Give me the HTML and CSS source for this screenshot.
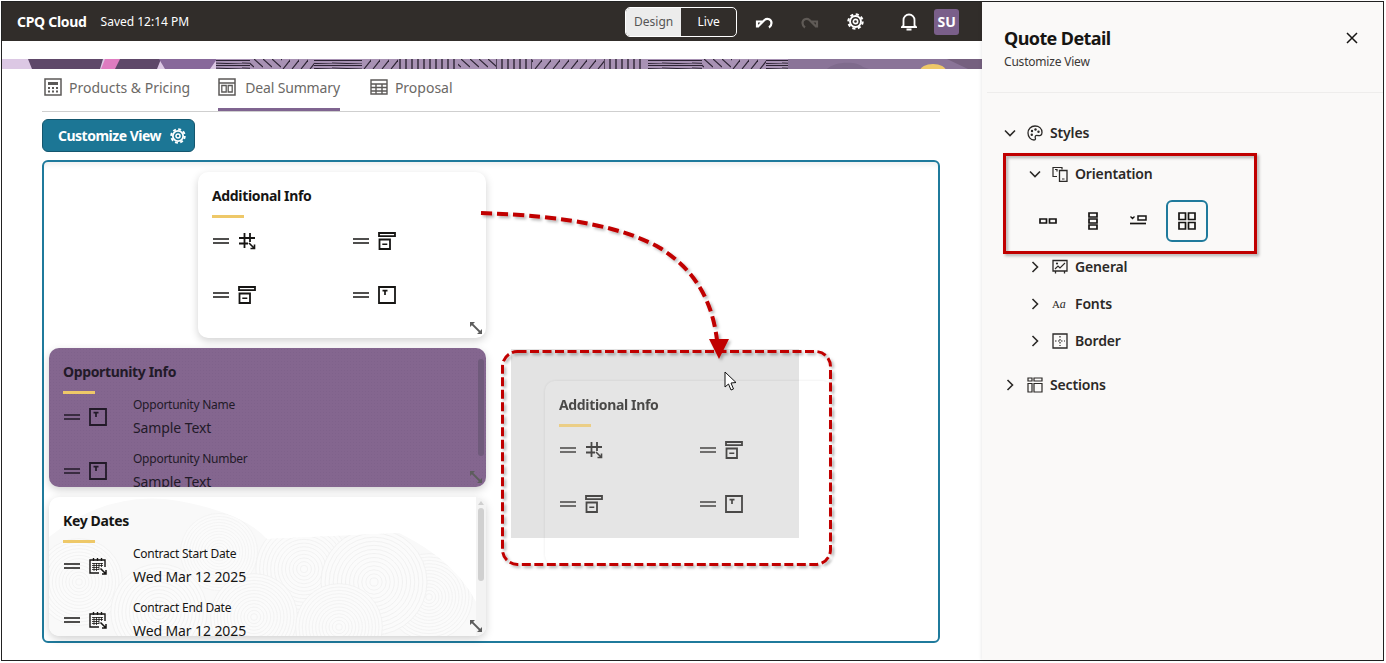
FILE: index.html
```html
<!DOCTYPE html>
<html lang="en">
<head>
    <meta charset="UTF-8">
    <meta name="viewport" content="width=device-width, initial-scale=1.0">
    <title>CPQ Cloud - Customize View</title>
    <link rel="stylesheet" href="styles.css">
</head>
<body>
    <svg class="sprites" width="0" height="0">
        <defs>
            <symbol id="i-drag" viewBox="0 0 16 18"><path d="M0 7h16M0 11h16" fill="none" stroke="currentColor" stroke-width="1.400"/></symbol>
            <symbol id="i-number" viewBox="0 0 18 18"><path d="M6.500 1v15M12 1v9M1 6h16M1 11.500h9" fill="none" stroke="currentColor" stroke-width="1.800"/><path d="M11 11l5 5M16.500 12.500v4h-4" fill="none" stroke="currentColor" stroke-width="1.600"/></symbol>
            <symbol id="i-select" viewBox="0 0 18 18"><path d="M1 1h16v3.200H1zM1.500 7.500h10.500V17H1.500z" fill="none" stroke="currentColor" stroke-width="1.800"/><path d="M4.300 12.200h5" stroke="currentColor" stroke-width="1.500"/></symbol>
            <symbol id="i-text" viewBox="0 0 18 18"><path d="M1 1h16v16H1z" fill="none" stroke="currentColor" stroke-width="1.800"/><path d="M4.500 4.700h5M7 4.700v4.300" fill="none" stroke="currentColor" stroke-width="1.700"/></symbol>
            <symbol id="i-cal" viewBox="0 0 18 18"><path d="M10 16H1V3h15v7" fill="none" stroke="currentColor" stroke-width="1.400"/><path d="M4.500 1v3M8.500 1v3M12.500 1v3" stroke="currentColor" stroke-width="1.400"/><path d="M3 6.500h11M3 8.500h11M3 10.500h7M3 12.500h7M5 6v8M7.500 6v8M10 6v7M12.500 6v4" stroke="currentColor" stroke-width=".8"/><path d="M11.500 11.500l5 5M17 13v4h-4" fill="none" stroke="currentColor" stroke-width="1.500"/></symbol>
            <symbol id="i-resize" viewBox="0 0 14 14"><path d="M2.500 2.500l9 9" stroke="currentColor" stroke-width="1.800"/><path d="M1 6V1h5zM13 8v5H8z" fill="currentColor"/></symbol>
            <symbol id="i-gear" viewBox="0 0 18 18"><circle cx="9" cy="9" r="5.800" fill="none" stroke="currentColor" stroke-width="2"/><circle cx="9" cy="9" r="7.600" fill="none" stroke="currentColor" stroke-width="2.200" stroke-dasharray="3.300 2.670"/><circle cx="9" cy="9" r="2.300" fill="none" stroke="currentColor" stroke-width="1.700"/></symbol>
            <symbol id="i-chev-down" viewBox="0 0 12 8"><path d="M1 1.500l5 5 5-5" fill="none" stroke="currentColor" stroke-width="1.600"/></symbol>
            <symbol id="i-chev-right" viewBox="0 0 8 12"><path d="M1.500 1l5 5-5 5" fill="none" stroke="currentColor" stroke-width="1.600"/></symbol>
            <symbol id="i-rings" viewBox="-54 -54 108 108"><g fill="none" stroke="#efefef" stroke-width=".8"><circle r="52" fill="#fbfbfb"/><circle r="48"/><circle r="44"/><circle r="40"/><circle r="36"/><circle r="32"/><circle r="28"/><circle r="24"/><circle r="20"/><circle r="16"/><circle r="12"/><circle r="8"/><circle r="4"/></g></symbol>
        </defs>
    </svg>

    <div class="frame">
        <div class="main">
            <header class="topbar">
                <span class="brand">CPQ Cloud</span>
                <span class="saved">Saved 12:14 PM</span>
                <div class="toggle">
                    <span class="toggle-on">Design</span>
                    <span class="toggle-off">Live</span>
                </div>
                <svg class="top-icon undo" width="18" height="16" viewBox="0 0 18 16"><path d="M2 13.500V7.500h6M2.500 13l7-7c3-2.500 7-.5 7 3 0 2-1 3.500-2.500 4.500" fill="none" stroke="currentColor" stroke-width="2.200"/></svg>
                <svg class="top-icon redo" width="18" height="16" viewBox="0 0 18 16"><path d="M16 13.500V7.500h-6M15.500 13l-7-7c-3-2.500-7-.5-7 3 0 2 1 3.500 2.500 4.500" fill="none" stroke="currentColor" stroke-width="2.200"/></svg>
                <svg class="top-icon gear" width="17" height="17"><use href="#i-gear"/></svg>
                <svg class="top-icon bell" width="16" height="18" viewBox="0 0 16 18"><path d="M2.500 12.500V7a5.500 5.500 0 0 1 11 0v5.500l1.500 1.500H1zM5.500 16.500h5" fill="none" stroke="currentColor" stroke-width="1.800"/><path d="M8 1v1" stroke="currentColor" stroke-width="1.800"/></svg>
                <span class="avatar">SU</span>
            </header>
            <div class="banner-gap"></div>
            <svg class="banner" width="980" height="10" viewBox="0 0 980 10" preserveAspectRatio="none">
                <defs>
                    <pattern id="p-h" width="30" height="5" patternUnits="userSpaceOnUse"><path d="M0 1.500h30M0 4l30 1" stroke="#2c2333" stroke-width="1"/></pattern>
                    <pattern id="p-v" width="6" height="10" patternUnits="userSpaceOnUse"><path d="M2 0v10" stroke="#2c2333" stroke-width="1.400"/></pattern>
                    <pattern id="p-f" width="9" height="10" patternUnits="userSpaceOnUse"><path d="M10 0L2 10" stroke="#2c2333" stroke-width="1.200"/></pattern>
                    <pattern id="p-b" width="9" height="10" patternUnits="userSpaceOnUse"><path d="M0 0l9 8" stroke="#2c2333" stroke-width="1.200"/></pattern>
                </defs>
                <rect width="980" height="10" fill="#dcc8e4"/>
                <path d="M26 0h75l-3 10H30zM116 0h43l-4 10h-43z" fill="#5e4869"/>
                <path d="M103 0h15l-5 10H99z" fill="#de7cc0"/>
                <path d="M157 0h58l-7 10h-45z" fill="#87689a"/>
                <rect x="214" width="572" height="10" fill="#a892b4"/>
                <rect x="214" width="34" height="10" fill="url(#p-h)"/>
                <rect x="248" width="32" height="10" fill="url(#p-b)"/>
                <rect x="280" width="32" height="10" fill="url(#p-f)"/>
                <rect x="312" width="48" height="10" fill="url(#p-h)"/>
                <rect x="360" width="36" height="10" fill="url(#p-f)"/>
                <rect x="396" width="60" height="10" fill="url(#p-v)"/>
                <rect x="456" width="38" height="10" fill="url(#p-b)"/>
                <rect x="494" width="36" height="10" fill="url(#p-v)"/>
                <rect x="530" width="72" height="10" fill="url(#p-f)"/>
                <rect x="602" width="40" height="10" fill="url(#p-v)"/>
                <rect x="646" width="54" height="10" fill="url(#p-h)"/>
                <rect x="700" width="30" height="10" fill="url(#p-b)"/>
                <rect x="730" width="34" height="10" fill="url(#p-f)"/>
                <rect x="764" width="22" height="10" fill="url(#p-h)"/>
                <rect x="786" width="194" height="10" fill="#8a7498"/>
                <path d="M825 10c8-8 30-8 36-2l6 2z" fill="#7f6b8d"/>
                <path d="M945 0h35v10h-14z" fill="#75607f"/>
                <ellipse cx="931" cy="12" rx="13" ry="7" fill="#eec868"/>
            </svg>

            <nav class="tabs">
                <a class="tab">
                    <svg width="18" height="18" viewBox="0 0 18 18"><path d="M1 1h16v16H1z" fill="none" stroke="currentColor" stroke-width="1.500"/><path d="M4 4h10v3H4z" fill="currentColor"/><path d="M4 10h2M8 10h2M12 10h2M4 13.500h2M8 13.500h2M12 13.500h2" stroke="currentColor" stroke-width="1.800"/></svg>
                    Products &amp; Pricing
                </a>
                <a class="tab tab-active">
                    <svg width="18" height="18" viewBox="0 0 18 18"><path d="M1 1h16v16H1zM1 5h16" fill="none" stroke="currentColor" stroke-width="1.500"/><path d="M3.800 7.500h4.400v6.500H3.800zM10.200 7.500h4v6.500h-4z" fill="none" stroke="currentColor" stroke-width="1.300"/></svg>
                    Deal Summary
                </a>
                <a class="tab">
                    <svg width="18" height="18" viewBox="0 0 18 18"><path d="M1 2h16v14H1zM1 6h16M1 9.500h16M1 13h16M6 6v10M12 6v10" fill="none" stroke="currentColor" stroke-width="1.400"/></svg>
                    Proposal
                </a>
            </nav>

            <button class="customize">
                Customize View
                <svg width="16" height="16"><use href="#i-gear"/></svg>
            </button>

            <section class="canvas">
                <div class="col">
                    <article class="card card-small">
                        <h3>Additional Info</h3>
                        <div class="fields fields-two">
                            <div class="field"><svg class="drag"><use href="#i-drag"/></svg><svg class="type"><use href="#i-number"/></svg></div>
                            <div class="field"><svg class="drag"><use href="#i-drag"/></svg><svg class="type"><use href="#i-select"/></svg></div>
                            <div class="field"><svg class="drag"><use href="#i-drag"/></svg><svg class="type"><use href="#i-select"/></svg></div>
                            <div class="field"><svg class="drag"><use href="#i-drag"/></svg><svg class="type"><use href="#i-text"/></svg></div>
                        </div>
                        <svg class="resize"><use href="#i-resize"/></svg>
                    </article>

                    <article class="card card-wide card-picked">
                        <h3>Opportunity Info</h3>
                        <div class="fields">
                            <div class="field">
                                <svg class="drag"><use href="#i-drag"/></svg><svg class="type"><use href="#i-text"/></svg>
                                <div class="field-text"><div class="field-label">Opportunity Name</div><div class="field-value">Sample Text</div></div>
                            </div>
                            <div class="field">
                                <svg class="drag"><use href="#i-drag"/></svg><svg class="type"><use href="#i-text"/></svg>
                                <div class="field-text"><div class="field-label">Opportunity Number</div><div class="field-value">Sample Text</div></div>
                            </div>
                        </div>
                        <div class="scrollbar"><div class="thumb"></div></div>
                        <svg class="resize"><use href="#i-resize"/></svg>
                    </article>

                    <article class="card card-wide card-swirl">
                        <svg class="swirl" width="437" height="139" viewBox="0 0 437 139">
                            <defs>
                                <clipPath id="swirl-clip"><path d="M0 40Q60-8 130 4Q195 16 218 42L350 36Q420 70 437 130V139H0z"/></clipPath>
                            </defs>
                            <g clip-path="url(#swirl-clip)">
                                <rect width="437" height="139" fill="#f9f9f9"/>
                                <use href="#i-rings" x="-15" y="40" width="90" height="90"/>
                                <use href="#i-rings" x="130" y="15" width="80" height="80"/>
                                <use href="#i-rings" x="205" y="22" width="100" height="100"/>
                                <use href="#i-rings" x="335" y="55" width="90" height="90"/>
                                <use href="#i-rings" x="270" y="30" width="110" height="110"/>
                                <use href="#i-rings" x="60" y="65" width="100" height="100"/>
                                <use href="#i-rings" x="160" y="75" width="90" height="90"/>
                                <use href="#i-rings" x="245" y="85" width="90" height="90"/>
                            </g>
                        </svg>
                        <h3>Key Dates</h3>
                        <div class="fields">
                            <div class="field">
                                <svg class="drag"><use href="#i-drag"/></svg><svg class="type"><use href="#i-cal"/></svg>
                                <div class="field-text"><div class="field-label">Contract Start Date</div><div class="field-value">Wed Mar 12 2025</div></div>
                            </div>
                            <div class="field">
                                <svg class="drag"><use href="#i-drag"/></svg><svg class="type"><use href="#i-cal"/></svg>
                                <div class="field-text"><div class="field-label">Contract End Date</div><div class="field-value">Wed Mar 12 2025</div></div>
                            </div>
                        </div>
                        <div class="scrollbar"><div class="scroll-up"></div><div class="thumb"></div></div>
                        <svg class="resize"><use href="#i-resize"/></svg>
                    </article>
                </div>

                <div class="drop-area"></div>
                <article class="card card-small card-ghost">
                    <h3>Additional Info</h3>
                    <div class="fields fields-two">
                        <div class="field"><svg class="drag"><use href="#i-drag"/></svg><svg class="type"><use href="#i-number"/></svg></div>
                        <div class="field"><svg class="drag"><use href="#i-drag"/></svg><svg class="type"><use href="#i-select"/></svg></div>
                        <div class="field"><svg class="drag"><use href="#i-drag"/></svg><svg class="type"><use href="#i-select"/></svg></div>
                        <div class="field"><svg class="drag"><use href="#i-drag"/></svg><svg class="type"><use href="#i-text"/></svg></div>
                    </div>
                </article>
            </section>
        </div>

        <aside class="panel">
            <div class="panel-head">
                <div>
                    <h2>Quote Detail</h2>
                    <p>Customize View</p>
                </div>
                <svg class="close" width="12" height="12" viewBox="0 0 12 12"><path d="M1 1l10 10M11 1L1 11" stroke="currentColor" stroke-width="1.500"/></svg>
            </div>
            <div class="tree">
                <div class="row">
                    <svg class="chev-down"><use href="#i-chev-down"/></svg>
                    <svg class="row-icon" viewBox="0 0 16 16"><path d="M8 1C4 1 1 4 1 8c0 3.500 2.500 7 6 7 2 0 1.500-1.500 1.200-2.500C8 11 9 10 10.500 10.500c2 .5 4.500 0 4.500-3C15 3.500 12 1 8 1z" fill="none" stroke="currentColor" stroke-width="1.300"/><circle cx="5" cy="6" r="1.200" fill="currentColor"/><circle cx="8.500" cy="4.500" r="1.200" fill="currentColor"/><circle cx="11.500" cy="6.800" r="1.200" fill="currentColor"/><circle cx="4.800" cy="9.800" r="1.200" fill="currentColor"/></svg>
                    <span>Styles</span>
                </div>
                <div class="row row-sub row-orient">
                    <svg class="chev-down"><use href="#i-chev-down"/></svg>
                    <svg class="row-icon" viewBox="0 0 16 16"><path d="M5 10.500H1V1.500h9v2" fill="none" stroke="currentColor" stroke-width="1.200"/><path d="M7.500 4.500h7.500v11H7.500z" fill="none" stroke="currentColor" stroke-width="1.300"/><path d="M10 13h2.500M3 3.500h2v2" fill="none" stroke="currentColor" stroke-width="1.200"/></svg>
                    <span>Orientation</span>
                </div>
                <div class="options">
                    <div class="option"><svg width="18" height="18" viewBox="0 0 18 18"><path d="M1 7h6.500v4H1zM10.500 7H17v4h-6.500z" fill="none" stroke="currentColor" stroke-width="1.700"/></svg></div>
                    <div class="option"><svg width="18" height="18" viewBox="0 0 18 18"><path d="M5 1h8v4H5zM5 7h8v4H5zM5 13h8v4H5z" fill="none" stroke="currentColor" stroke-width="1.700"/></svg></div>
                    <div class="option"><svg width="18" height="18" viewBox="0 0 18 18"><path d="M9 4h8v4H9z" fill="none" stroke="currentColor" stroke-width="1.500"/><path d="M1 11.500h16" stroke="currentColor" stroke-width="1.700"/><path d="M1.500 4.500L3.500 6.500 5.500 4.500" fill="none" stroke="currentColor" stroke-width="1.300"/></svg></div>
                    <div class="option option-on"><svg width="18" height="18" viewBox="0 0 18 18"><path d="M1 1h6.500v6.500H1zM10.500 1H17v6.500h-6.500zM1 10.500h6.500V17H1zM10.500 10.500H17V17h-6.500z" fill="none" stroke="currentColor" stroke-width="1.700"/></svg></div>
                </div>
                <div class="row row-sub row-general">
                    <svg class="chev-right"><use href="#i-chev-right"/></svg>
                    <svg class="row-icon" viewBox="0 0 16 16"><path d="M1 1.500h14v10.500H1zM3.500 12v2.500M12.500 12v2.500" fill="none" stroke="currentColor" stroke-width="1.300"/><path d="M3 10l3-3 2 2 5-5" fill="none" stroke="currentColor" stroke-width="1.100"/><circle cx="5" cy="4.500" r="1.100" fill="currentColor"/></svg>
                    <span>General</span>
                </div>
                <div class="row row-sub">
                    <svg class="chev-right"><use href="#i-chev-right"/></svg>
                    <span class="row-icon aa">A<i>a</i></span>
                    <span>Fonts</span>
                </div>
                <div class="row row-sub">
                    <svg class="chev-right"><use href="#i-chev-right"/></svg>
                    <svg class="row-icon" viewBox="0 0 16 16"><path d="M1 1h14v14H1z" fill="none" stroke="currentColor" stroke-width="1.300"/><path d="M8 3v10M3 8h10" stroke="currentColor" stroke-width="1.200" stroke-dasharray="1.500 1.500"/></svg>
                    <span>Border</span>
                </div>
                <div class="row row-sections">
                    <svg class="chev-right"><use href="#i-chev-right"/></svg>
                    <svg class="row-icon" viewBox="0 0 16 16"><path d="M1 1h4v3H1zM1 6.500h4V15H1zM7 1h8v3H7zM7 6.500h8V15H7z" fill="none" stroke="currentColor" stroke-width="1.200"/></svg>
                    <span>Sections</span>
                </div>
            </div>
        </aside>
    </div>

    <!-- callouts drawn on top of the screenshot -->
    <svg class="callouts" width="1386" height="663" viewBox="0 0 1386 663">
        <defs>
            <filter id="soft" x="-10%" y="-10%" width="125%" height="125%"><feDropShadow dx="2" dy="2" stdDeviation="1.500" flood-color="#000" flood-opacity=".3"/></filter>
        </defs>
        <g filter="url(#soft)">
            <rect x="1004.500" y="154.500" width="251" height="98" fill="none" stroke="#c00000" stroke-width="3"/>
            <rect x="502.500" y="351.500" width="328" height="213" rx="15" fill="none" stroke="#c00000" stroke-width="3" stroke-dasharray="9 3.500"/>
            <path d="M481 213C570 216 625 228 660 248C695 270 712 300 717 340" fill="none" stroke="#c00000" stroke-width="4" stroke-dasharray="11 5"/>
            <path d="M709 339h20l-10 20z" fill="#c00000"/>
        </g>
        <path d="M725 372v15l3.500-3 2.500 6 2.500-1-2.500-6 5-.5z" fill="#fff" stroke="#111" stroke-width="1"/>
    </svg>
</body>
</html>
```

FILE: styles.css
```css
* {
    box-sizing: border-box;
}
html, body {
    margin: 0;
    height: 100%;
    overflow: hidden;
    background: white;
}
body {
    position: relative;
    font-family: "Noto Sans", Arial, sans-serif;
    color: #161513;
}
.sprites {
    position: absolute;
}
.frame {
    display: flex;
    width: 1383px;
    height: 660px;
    margin: 1px;
    border: 1px solid #222;
}

/* left side */
.main {
    width: 980px;
    flex: none;
    display: flex;
    flex-direction: column;
}
.topbar {
    height: 39px;
    background: #312d2a;
    color: white;
    display: flex;
    align-items: center;
    padding-left: 15px;
}
.brand {
    font-size: 14px;
    font-weight: 700;
    letter-spacing: -0.3px;
}
.saved {
    font-size: 12px;
    margin-left: 14px;
}
.toggle {
    display: flex;
    margin-left: 436px;
    width: 112px;
    height: 30px;
    border: 1px solid white;
    border-radius: 5px;
    overflow: hidden;
    font-size: 12px;
    line-height: 28px;
    text-align: center;
}
.toggle-on {
    width: 55px;
    background: #ececec;
    color: #555;
}
.toggle-off {
    flex: 1;
}
.top-icon {
    flex: none;
}
.undo {
    margin-left: 18px;
}
.redo {
    margin-left: 28px;
    color: #5f5a56;
}
.gear {
    margin-left: 28px;
}
.bell {
    margin-left: 37px;
}
.avatar {
    width: 25px;
    height: 26px;
    margin-left: 17px;
    background: #7a5f8a;
    border-radius: 3px;
    font-size: 14px;
    font-weight: 700;
    line-height: 26px;
    text-align: center;
}
.banner-gap {
    height: 18px;
}
.banner {
    display: block;
    flex: none;
}
.tabs {
    display: flex;
    gap: 28px;
    height: 43px;
    margin: 0 42px 0 40px;
    padding-left: 2px;
    border-bottom: 1px solid #cfcfcf;
}
.tab {
    display: flex;
    align-items: center;
    gap: 7px;
    height: 42px;
    padding-bottom: 3px;
    font-size: 14px;
    color: #6b6966;
    border-bottom: 3px solid transparent;
}
.tab svg {
    color: #5c5a58;
}
.tab-active {
    gap: 9px;
    margin-right: 2px;
    letter-spacing: -0.15px;
    border-bottom-color: #7f6490;
}
.customize {
    display: flex;
    align-items: center;
    gap: 9px;
    width: 153px;
    height: 33px;
    margin: 7px 0 8px 40px;
    padding: 0 0 0 15px;
    background: #1c7695;
    border: 1px solid #14566e;
    border-radius: 6px;
    color: white;
    font-family: inherit;
    font-size: 14px;
    font-weight: 700;
    letter-spacing: -0.5px;
}
.canvas {
    position: relative;
    width: 898px;
    height: 483px;
    margin-left: 40px;
    padding: 10px 5px;
    border: 2px solid #1f7a9c;
    border-radius: 6px;
    box-shadow: inset 0 7px 5px -4px #f0f0f0;
}
.col {
    display: flex;
    flex-direction: column;
    gap: 10px;
    width: 437px;
}
.card {
    position: relative;
    flex: none;
    overflow: hidden;
    padding: 14px;
    background: white;
    border-radius: 10px;
    box-shadow: 0 3px 9px rgba(0,0,0,0.18);
}
.card h3 {
    position: relative;
    margin: 0;
    font-size: 14px;
    line-height: 20px;
    font-weight: 700;
    letter-spacing: -0.35px;
}
.card h3::after {
    content: "";
    display: block;
    width: 32px;
    height: 3px;
    margin-top: 9px;
    background: #eec868;
}
.card-small {
    width: 288px;
    height: 166px;
    margin-left: 149px;
}
.card-wide {
    height: 139px;
}
.card-picked {
    background-color: #84668f;
    background-image: radial-gradient(rgba(60,40,70,0.06) 0.7px, transparent 0.9px);
    background-size: 3px 3px;
    color: #221a28;
}
.swirl {
    position: absolute;
    top: 0;
    left: 0;
}
.fields {
    position: relative;
    display: grid;
    grid-auto-rows: 42px;
    gap: 12px 0;
    margin-top: 2px;
}
.fields-two {
    grid-template-columns: 140px 140px;
}
.field {
    display: flex;
    align-items: center;
    padding-left: 1px;
}
.drag {
    width: 16px;
    height: 18px;
    flex: none;
}
.type {
    width: 18px;
    height: 18px;
    flex: none;
    margin-left: 9px;
}
.field-text {
    margin-left: 26px;
}
.field-label {
    font-size: 12px;
    line-height: 18px;
    letter-spacing: -0.25px;
}
.field-value {
    margin-top: 4px;
    font-size: 14px;
    line-height: 20px;
    letter-spacing: -0.1px;
}
.resize {
    position: absolute;
    right: 3px;
    bottom: 3px;
    width: 14px;
    height: 14px;
    color: #5d5d5d;
}
.scrollbar {
    position: absolute;
    top: 0;
    right: 0;
    bottom: 0;
    width: 10px;
    padding-top: 11px;
    background: #f3f3f3;
}
.scroll-up {
    position: absolute;
    top: 4px;
    left: 2px;
    border: 3px solid transparent;
    border-bottom: 4px solid #cfcfcf;
    border-top: 0;
}
.thumb {
    width: 6px;
    height: 73px;
    margin-left: 2px;
    background: #d0d0d0;
    border-radius: 3px;
}
.card-picked .scrollbar {
    background: transparent;
}
.card-picked .thumb {
    height: 97px;
    background: #6f5a7b;
}
.drop-area {
    position: absolute;
    left: 467px;
    top: 187px;
    width: 288px;
    height: 189px;
    background: #e3e3e3;
}
.card-ghost {
    position: absolute;
    left: 501px;
    top: 219px;
    height: 184px;
    margin: 0;
    background: rgba(255,255,255,0.1);
    box-shadow: 0 0 3px rgba(0,0,0,0.12);
    opacity: 0.75;
}

/* right side */
.panel {
    flex: 1;
    background: #faf9f8;
    box-shadow: -1px 0 3px rgba(0,0,0,0.08);
}
.panel-head {
    display: flex;
    justify-content: space-between;
    height: 91px;
    margin-left: 5px;
    padding: 24px 25px 0 17px;
    border-bottom: 1px solid #eeedec;
}
.panel-head h2 {
    margin: 0;
    font-size: 18px;
    line-height: 24px;
    font-weight: 700;
    letter-spacing: -0.6px;
}
.panel-head p {
    margin: 3px 0 0;
    font-size: 12px;
    letter-spacing: -0.2px;
    color: #3a3836;
}
.close {
    margin-top: 6px;
}
.tree {
    padding-left: 22px;
    padding-top: 21px;
}
.row {
    display: flex;
    align-items: center;
    height: 37px;
    font-size: 14px;
    font-weight: 600;
    letter-spacing: -0.15px;
    color: #2b2927;
}
.row-sub {
    padding-left: 25px;
}
.row-orient {
    margin-top: 4px;
}
.row-general {
    margin-top: 6px;
}
.row-sections {
    margin-top: 7px;
}
.chev-down {
    width: 12px;
    height: 8px;
    flex: none;
    margin-right: 11px;
}
.chev-right {
    width: 8px;
    height: 12px;
    flex: none;
    margin: 0 13px 0 2px;
}
.row-icon {
    width: 16px;
    height: 16px;
    flex: none;
    margin-right: 7px;
}
.aa {
    font-size: 11px;
    font-weight: 400;
    font-family: "Liberation Serif", serif;
    line-height: 16px;
    white-space: nowrap;
}
.aa i {
    font-size: 12px;
}
.options {
    display: flex;
    align-items: center;
    margin: 8px 0 0 21px;
}
.option {
    display: flex;
    align-items: center;
    justify-content: center;
    width: 45px;
    height: 42px;
}
.option-on {
    width: 42px;
    margin-left: 6px;
    border: 2px solid #1f7a9c;
    border-radius: 6px;
}

.callouts {
    position: absolute;
    top: 0;
    left: 0;
    pointer-events: none;
}
```
